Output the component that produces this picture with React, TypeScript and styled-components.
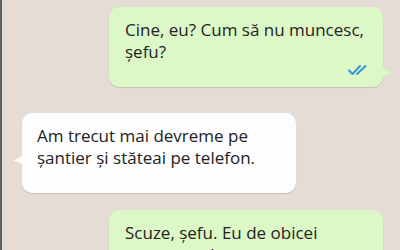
import { FC, ReactElement } from 'react';
import styled, { createGlobalStyle } from 'styled-components';

const GlobalStyle = createGlobalStyle`
    html, body {
        margin: 0;
        padding: 0;
        width: 400px;
        height: 250px;
        overflow: hidden;
    }
    body {
        font-family: 'Open Sans', 'Noto Sans', sans-serif;
        background: #e5ddd5;
    }
`;

const Ticks: FC = (): ReactElement => (
    <svg width="20" height="12" viewBox="0 0 20 12">
        <path d="M1 6.5 L4.5 10 L12 2" fill="none" stroke="#3597d3" strokeWidth="2" strokeLinecap="round" strokeLinejoin="round" />
        <path d="M9 10 L17.5 2" fill="none" stroke="#3597d3" strokeWidth="2" strokeLinecap="round" />
    </svg>
);

const Tail: FC<{ side: 'left' | 'right'; color: string }> = ({ side, color }): ReactElement => (
    <TailBox $side={side}>
        <svg width="12" height="14" viewBox="0 0 12 14">
            {side === 'right' ? (
                <path d="M0 0 C1.5 5 5 8.5 11 9 C7 10.5 3.5 12 0 14 Z" fill={color} />
            ) : (
                <path d="M12 0 C10.5 5 7 8.5 1 9 C5 10.5 8.5 12 12 14 Z" fill={color} />
            )}
        </svg>
    </TailBox>
);

const App: FC = (): ReactElement => {
    return (
        <Screen>
            <GlobalStyle />
            <Edge />
            <Chat>
                <Bubble $out $top={7}>
                    <Text>
                        Cine, eu? Cum să nu muncesc,
                        <br />
                        șefu?
                    </Text>
                    <Meta>
                        <Ticks />
                    </Meta>
                    <Tail side="right" color="#dcf8c6" />
                </Bubble>
                <Bubble $top={26}>
                    <Text>
                        Am trecut mai devreme pe
                        <br />
                        șantier și stăteai pe telefon.
                    </Text>
                    <Meta />
                    <Tail side="left" color="#fdfdfd" />
                </Bubble>
                <Bubble $out $top={17}>
                    <Text>
                        Scuze, șefu. Eu de obicei
                        <br />
                        muncesc, dar acum nu am
                    </Text>
                </Bubble>
            </Chat>
        </Screen>
    );
};

const Screen = styled.div`
    display: flex;
    width: 400px;
    height: 250px;
    overflow: hidden;
    background: #e5ddd5;
`;
const Edge = styled.div`
    width: 2px;
    flex-shrink: 0;
    background: #5c6265;
`;
const Chat = styled.div`
    flex: 1;
    display: flex;
    flex-direction: column;
    padding: 0 17px 0 20px;
`;
const Bubble = styled.div<{ $out?: boolean; $top: number }>`
    position: relative;
    align-self: ${(p) => (p.$out ? 'flex-end' : 'flex-start')};
    width: 274px;
    box-sizing: border-box;
    margin-top: ${(p) => p.$top}px;
    padding: 12px 14px 10px 15px;
    padding-left: ${(p) => (p.$out ? 16 : 15)}px;
    border-radius: 10px;
    background: ${(p) => (p.$out ? '#dcf8c6' : '#fdfdfd')};
    box-shadow: 0 1px 1px rgba(0, 0, 0, 0.14);
    flex-shrink: 0;
`;
const Text = styled.div`
    font-size: 17px;
    line-height: 22px;
    color: #222222;
    white-space: nowrap;
`;
const Meta = styled.div`
    height: 14px;
    display: flex;
    justify-content: flex-end;
    align-items: center;
    margin-right: 1px;
`;
const TailBox = styled.div<{ $side: 'left' | 'right' }>`
    position: absolute;
    ${(p) => (p.$side === 'right' ? 'right: -10px; bottom: 10px;' : 'left: -10px; bottom: 28px;')}
    width: 12px;
    height: 14px;
    line-height: 0;
`;

export default App;
